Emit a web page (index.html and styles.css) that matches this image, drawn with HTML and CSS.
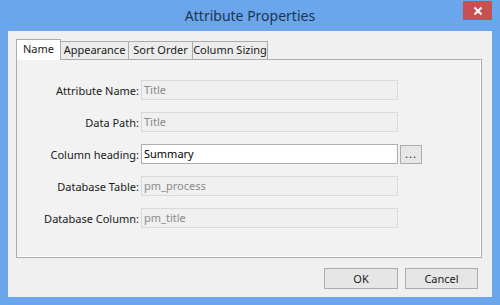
FILE: index.html
```html
<!DOCTYPE html>
<html>
<head>
<meta charset="utf-8">
<title>Attribute Properties</title>
<link rel="stylesheet" href="styles.css">
</head>
<body>
<div class="window">
	<div class="titlebar">
		<span class="title">Attribute Properties</span>
		<div class="close">
			<svg width="10" height="10" viewBox="0 0 10 10"><path d="M1.5 1.5 L8.5 8.5 M8.5 1.5 L1.5 8.5" stroke="#fff" stroke-width="2"/></svg>
		</div>
	</div>
	<div class="client">
		<div class="tabs">
			<div class="tab active">Name</div>
			<div class="tab">Appearance</div>
			<div class="tab">Sort Order</div>
			<div class="tab">Column Sizing</div>
		</div>
		<div class="panel">
			<div class="form">
				<label>Attribute Name:</label>
				<div class="field disabled">Title</div>
				<span></span>

				<label>Data Path:</label>
				<div class="field disabled">Title</div>
				<span></span>

				<label>Column heading:</label>
				<div class="field">Summary</div>
				<div class="browse">...</div>

				<label>Database Table:</label>
				<div class="field disabled">pm_process</div>
				<span></span>

				<label>Database Column:</label>
				<div class="field disabled">pm_title</div>
				<span></span>
			</div>
		</div>
		<div class="buttons">
			<div class="btn ok">OK</div>
			<div class="btn cancel">Cancel</div>
		</div>
	</div>
</div>
</body>
</html>
```

FILE: styles.css
```css
* {
	box-sizing: border-box;
}

body {
	margin: 0;
	font-family: "Noto Sans", "Open Sans", sans-serif;
	font-size: 11px;
	color: #1a1a1a;
}

.window {
	position: relative;
	width: 500px;
	height: 305px;
	background: #6ba6ec;
	padding: 0 8px 8px 8px;
}

.titlebar {
	height: 31px;
	line-height: 31px;
	text-align: center;
}

.title {
	font-size: 14px;
	color: #1c3552;
}

.close {
	position: absolute;
	top: 1px;
	right: 8px;
	width: 29px;
	height: 19px;
	background: #c75050;
	display: flex;
	align-items: center;
	justify-content: center;
}

.close svg {
	display: block;
}

.client {
	height: 266px;
	background: #f0f0f0;
	padding: 8px 10px 0 8px;
	display: flex;
	flex-direction: column;
}

.tabs {
	display: flex;
	align-items: flex-end;
	height: 20px;
	position: relative;
	z-index: 2;
}

.tab {
	height: 18px;
	line-height: 16px;
	border: 1px solid #acacac;
	border-bottom: none;
	border-left: none;
	background: #ececec;
	white-space: nowrap;
	text-align: center;
}

.tab.active {
	height: 21px;
	margin-bottom: -1px;
	line-height: 18px;
	border-left: 1px solid #acacac;
	background: #fff;
	width: 45px;
}

.tab:nth-child(2) { width: 68px; }
.tab:nth-child(3) { width: 64px; }
.tab:nth-child(4) { width: 75px; }

.panel {
	height: 199px;
	border: 1px solid #acacac;
	background: #f2f2f2;
	box-shadow: inset -1px -1px 0 #fff;
	padding: 20px 0 0 0;
}

.form {
	display: grid;
	grid-template-columns: 122px 257px 22px;
	column-gap: 2px;
	row-gap: 12px;
	align-items: center;
}

.form label {
	text-align: right;
	white-space: nowrap;
	padding-top: 1px;
}

.field {
	height: 20px;
	line-height: 17px;
	padding: 0 2px;
	border: 1px solid #abadb3;
	background: #fff;
	color: #000;
}

.field.disabled {
	border-color: #d9d9d9;
	background: #f0f0f0;
	color: #8a8a8a;
}

.browse {
	height: 19px;
	margin-top: 1px;
	border: 1px solid #acacac;
	background: #e7e7e7;
	text-align: center;
	line-height: 15px;
	letter-spacing: 1px;
}

.buttons {
	display: flex;
	justify-content: flex-end;
	gap: 7px;
	margin-top: 10px;
	padding-right: 4px;
}

.btn {
	height: 21px;
	line-height: 19px;
	border: 1px solid #acacac;
	background: #e6e6e6;
	text-align: center;
}

.btn.ok { width: 74px; }
.btn.cancel { width: 73px; }
```
